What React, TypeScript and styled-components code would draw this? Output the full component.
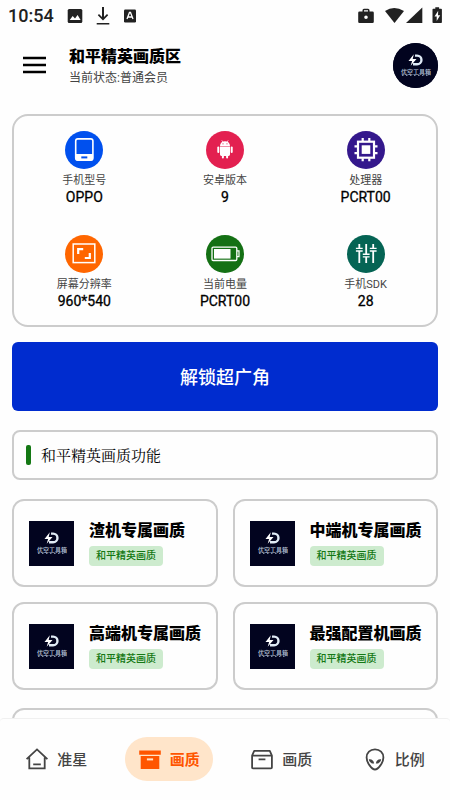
import React from "react";
import styled, { createGlobalStyle } from "styled-components";

const GlobalStyle = createGlobalStyle`
  * { box-sizing: border-box; }
  body {
    margin: 0;
    background: #fefefe;
    color: #000;
    font-family: Roboto, "Noto Sans CJK SC", sans-serif;
  }
  h1, h2, h3, p, dl, dt, dd { margin: 0; }
  button { font-family: inherit; cursor: pointer; }
`;

const Screen = styled.div`
  height: 100vh;
  display: flex;
  flex-direction: column;
`;

const StatusBar = styled.div`
  flex: none;
  height: 32px;
  padding: 0 7px 0 8px;
  display: flex;
  align-items: center;
  justify-content: space-between;
  color: #212121;
`;

const StatusGroup = styled.div`
  display: flex;
  align-items: center;
  gap: 13px;
  svg { display: block; }
`;

const Clock = styled.time`
  font-size: 18px;
  line-height: 24px;
  font-weight: 500;
`;

const Header = styled.header`
  flex: none;
  height: 66px;
  padding: 0 12px 0 23px;
  display: flex;
  align-items: center;
`;

const MenuButton = styled.button`
  width: 24px;
  height: 24px;
  padding: 0;
  border: 0;
  background: none;
  svg { display: block; }
`;

const Heading = styled.div`
  flex: 1;
  margin-left: 22px;
  padding-top: 3px;
`;

const Title = styled.h1`
  font-size: 16px;
  line-height: 22px;
  font-weight: 900;
`;

const Subtitle = styled.p`
  font-size: 12px;
  line-height: 20px;
  color: #444;
`;

const Avatar = styled.button`
  width: 45px;
  height: 45px;
  padding: 0;
  border: 0;
  border-radius: 50%;
  overflow: hidden;
  background: #02041f;
  svg { display: block; }
`;

const Main = styled.main`
  flex: 1;
  min-height: 0;
  overflow-y: auto;
  scrollbar-width: none;
  padding: 16px 12px 0;
`;

const InfoCard = styled.dl`
  display: grid;
  grid-template-columns: repeat(3, 1fr);
  row-gap: 30px;
  padding: 15px 0 16px;
  border: 2px solid #ccc;
  border-radius: 16px;
`;

const InfoItem = styled.div`
  display: flex;
  flex-direction: column;
  align-items: center;
`;

const InfoIcon = styled.span<{ $color: string }>`
  width: 38px;
  height: 38px;
  margin-bottom: 3px;
  border-radius: 50%;
  background: ${(p) => p.$color};
  svg { display: block; }
`;

const InfoLabel = styled.dt`
  font-size: 11px;
  line-height: 17px;
  color: #444;
`;

const InfoValue = styled.dd`
  font-size: 14px;
  line-height: 16px;
  font-weight: 400;
  -webkit-text-stroke: 0.3px #000;
`;

const UnlockButton = styled.button`
  display: block;
  width: 100%;
  height: 69px;
  margin-top: 15px;
  padding: 0 0 2px;
  border: 0;
  border-radius: 6px;
  background: #002ccf;
  color: #fff;
  font-size: 18px;
  font-weight: 500;
`;

const SectionTitle = styled.h2`
  display: flex;
  align-items: center;
  gap: 10px;
  height: 50px;
  margin: 19px 0;
  padding: 0 12px;
  border: 2px solid #ccc;
  border-radius: 8px;
  font-family: "Noto Serif CJK SC", "Noto Sans CJK SC", serif;
  font-size: 15px;
  line-height: 20px;
  font-weight: 400;

  &::before {
    content: "";
    width: 5px;
    height: 20px;
    border-radius: 2px;
    background: #147814;
  }
`;

const FeatureGrid = styled.div`
  display: grid;
  grid-template-columns: repeat(2, minmax(0, 1fr));
  gap: 15px;
`;

const cardFrame = `
  border: 2px solid #ccc;
  border-radius: 12px;
  background: #fefefe;
`;

const FeatureCard = styled.button`
  ${cardFrame}
  height: 88px;
  padding: 0 0 0 15px;
  display: flex;
  align-items: center;
  gap: 15px;
  color: #000;
  text-align: left;
  svg { display: block; flex: none; }
`;

const FeatureText = styled.span`
  display: flex;
  flex-direction: column;
  align-items: flex-start;
  gap: 4px;
  white-space: nowrap;
`;

const FeatureName = styled.span`
  font-size: 16px;
  line-height: 22px;
  font-weight: 900;
`;

const Tag = styled.span`
  padding: 0 7px;
  border-radius: 4px;
  background: #cdebce;
  color: #147814;
  font-size: 10px;
  line-height: 20px;
  font-weight: 500;
`;

const MorePanel = styled.section`
  ${cardFrame}
  height: 88px;
  margin-top: 18px;
`;

const TabBar = styled.nav`
  flex: none;
  display: grid;
  grid-template-columns: repeat(4, 1fr);
  place-items: center;
  height: 82px;
  padding-bottom: 2px;
  border-top: 1px solid #f0f0f0;
  border-radius: 4px;
  background: #fefefe;
`;

const Tab = styled.button<{ $active?: boolean }>`
  display: flex;
  align-items: center;
  gap: 8px;
  height: 44px;
  padding: 0 13px;
  border: 0;
  border-radius: 22px;
  background: ${(p) => (p.$active ? "#ffe5ca" : "transparent")};
  color: ${(p) => (p.$active ? "#ff5500" : "#444")};
  font-size: 15px;
  font-weight: ${(p) => (p.$active ? 700 : 500)};
  white-space: nowrap;
  svg { display: block; }
`;

const Logo = () => (
  <svg width="45" height="45" viewBox="0 0 45 45" aria-hidden="true">
    <rect width="45" height="45" fill="#02041f" />
    <path d="M20.8 11.2 15.5 18h3.6l-1.4 4.8 5.8-6.8h-3.8z" fill="#fff" />
    <path
      d="M22 12.6h2.1a4.3 4.3 0 0 1 0 8.7H20"
      fill="none"
      stroke="#dfeaf5"
      strokeWidth="2.4"
    />
    <text
      x="23"
      y="30.5"
      textAnchor="middle"
      fontSize="6"
      fontWeight="500"
      fill="#b9c6da"
    >
      优空工具箱
    </text>
    <path d="M9 32.5h28" stroke="#7d8ba6" strokeWidth="1" strokeDasharray="1.5 2.5" />
  </svg>
);

const PhoneIcon = () => (
  <svg width="38" height="38" viewBox="0 0 38 38" fill="none">
    <rect x="10.7" y="7.9" width="17.2" height="21.4" rx="2.2" stroke="#fff" strokeWidth="1.6" />
    <path d="M10.5 23h17.6v4.3a2.5 2.5 0 0 1-2.5 2.5H13a2.5 2.5 0 0 1-2.5-2.5z" fill="#fff" />
    <rect x="16.3" y="25.4" width="6" height="2" fill="#0050ee" />
  </svg>
);

const AndroidIcon = () => (
  <svg width="38" height="38" viewBox="0 0 38 38" fill="#fff">
    <path d="M14 15.5h10v8a1.4 1.4 0 0 1-1.4 1.4h-7.2a1.4 1.4 0 0 1-1.4-1.4z" />
    <path d="M14 14.9a5 4.7 0 0 1 10 0z" />
    <rect x="11.3" y="15.5" width="2" height="6.4" rx="1" />
    <rect x="24.7" y="15.5" width="2" height="6.4" rx="1" />
    <rect x="15.9" y="23.5" width="2" height="4" rx="1" />
    <rect x="20.1" y="23.5" width="2" height="4" rx="1" />
    <path d="m15.8 9.3 1.2 2m5.2-2-1.2 2" stroke="#fff" strokeWidth=".7" />
    <circle cx="17" cy="12.8" r=".6" fill="#e32050" />
    <circle cx="21" cy="12.8" r=".6" fill="#e32050" />
  </svg>
);

const ChipIcon = () => (
  <svg width="38" height="38" viewBox="0 0 38 38" fill="none" stroke="#fff">
    <rect x="11" y="10.7" width="16" height="16" strokeWidth="2.2" />
    <rect x="14.7" y="14.3" width="8.6" height="8.6" fill="#fff" stroke="none" />
    <path
      d="M15.7 7v3m6.6-3v3m-6.6 17.3v3m6.6-3v3M7.5 15.3h3m-3 6.8h3m17-6.8h3m-3 6.8h3"
      strokeWidth="2.2"
    />
  </svg>
);

const ResolutionIcon = () => (
  <svg width="38" height="38" viewBox="0 0 38 38" fill="none" stroke="#fff">
    <rect x="8.2" y="9" width="21.6" height="18.6" strokeWidth="1.5" />
    <path d="M13.2 19v-4.8h5m6.6 3.8v5h-5" strokeWidth="2.2" />
  </svg>
);

const BatteryIcon = () => (
  <svg width="38" height="38" viewBox="0 0 38 38" fill="none">
    <rect x="6" y="12.1" width="24.8" height="13.4" rx="1.2" stroke="#fff" strokeWidth="1.3" />
    <rect x="8" y="14" width="16.5" height="9.6" fill="#fff" />
    <path d="M31 15.9h2v5.8h-2" stroke="#fff" strokeWidth="1.2" />
  </svg>
);

const SlidersIcon = () => (
  <svg width="38" height="38" viewBox="0 0 38 38" fill="none" stroke="#fff" strokeWidth="1.8">
    <path d="M12.3 9v4M12.3 16v12M19.2 9v10M19.2 22V28M26.2 9v4M26.2 16v12" />
    <path d="M8.9 13.4h6.8M8.9 16h6.8M15.8 19.3h6.8M15.8 21.9h6.8M22.8 13.4h6.8M22.8 16h6.8" strokeWidth="1.4" />
  </svg>
);

const HomeIcon = () => (
  <svg width="24" height="24" viewBox="0 0 24 24" fill="none" stroke="currentColor" strokeWidth="1.8">
    <path d="M1.6 12.2 12 2.4l10.4 9.8M4.3 10.4v11h15.4v-11M8.2 17.4h7.6" />
  </svg>
);

const ArchiveIcon = () => (
  <svg width="24" height="24" viewBox="0 0 24 24" fill="currentColor">
    <path d="M1.2 3.4h21.6v4.3H1.2zM2.7 9h18.6v12.9H2.7z" />
    <rect x="8.9" y="11.4" width="6.2" height="2" fill="#ffe5ca" />
  </svg>
);

const BoxIcon = () => (
  <svg width="24" height="24" viewBox="0 0 24 24" fill="none" stroke="currentColor" strokeWidth="1.8" strokeLinejoin="round">
    <path d="M2.1 8.6 4.2 3.8h15.6l2.1 4.8v11.9q0 .9-.9.9H3q-.9 0-.9-.9zM2.1 8.6h19.8M8.6 12.3h6.8" />
  </svg>
);

const AlienIcon = () => (
  <svg width="24" height="24" viewBox="0 0 24 24" fill="none">
    <path
      d="M12 2.4c-5 0-8.4 3.5-8.4 8.1 0 5 5.2 12 8.4 12s8.4-7 8.4-12c0-4.6-3.4-8.1-8.4-8.1z"
      stroke="currentColor"
      strokeWidth="1.8"
    />
    <path
      d="M5.8 12.3c2.8-.5 5.2 1.3 5.3 4.3-2.9.2-5.1-1.6-5.3-4.3zM18.2 12.3c-2.8-.5-5.2 1.3-5.3 4.3 2.9.2 5.1-1.6 5.3-4.3z"
      fill="currentColor"
    />
  </svg>
);

const device = [
  { label: "手机型号", value: "OPPO", color: "#0050ee", icon: <PhoneIcon /> },
  { label: "安卓版本", value: "9", color: "#e32050", icon: <AndroidIcon /> },
  { label: "处理器", value: "PCRT00", color: "#34188c", icon: <ChipIcon /> },
  { label: "屏幕分辨率", value: "960*540", color: "#ff6600", icon: <ResolutionIcon /> },
  { label: "当前电量", value: "PCRT00", color: "#147014", icon: <BatteryIcon /> },
  { label: "手机SDK", value: "28", color: "#056454", icon: <SlidersIcon /> },
];

const features = ["渣机专属画质", "中端机专属画质", "高端机专属画质", "最强配置机画质"];

const tabs = [
  { label: "准星", icon: <HomeIcon /> },
  { label: "画质", icon: <ArchiveIcon />, active: true },
  { label: "画质", icon: <BoxIcon /> },
  { label: "比例", icon: <AlienIcon /> },
];

export default function App() {
  return (
    <Screen>
      <GlobalStyle />
      <StatusBar>
        <StatusGroup>
          <Clock>10:54</Clock>
          <svg width="16" height="16" viewBox="0 0 16 16" fill="currentColor">
            <rect x=".7" y="1" width="14.6" height="14" rx="1.5" />
            <path d="m2.7 12 3-4 2.3 2.6L10.6 7l3 5z" fill="#fefefe" />
          </svg>
          <svg width="14" height="18" viewBox="0 0 14 18" fill="currentColor">
            <path d="M6 0h2v10l3-3 1.2 1.2L7 13.4 1.8 8.2 3 7l3 3zM.7 16h12.6v1.5H.7z" />
          </svg>
          <svg width="14" height="14" viewBox="0 0 14 14" fill="none">
            <rect x="1" y=".5" width="12" height="13" rx="1.2" fill="currentColor" />
            <path d="m4 10 2.5-6.5h1L10 10M5 8h4" stroke="#fefefe" strokeWidth="1.3" />
          </svg>
        </StatusGroup>
        <svg width="86" height="18" viewBox="0 0 86 18" fill="currentColor">
          <path fillRule="evenodd" d="M2.5 4.5h3V3.2Q5.5 1.7 7 1.7h4q1.5 0 1.5 1.5v1.3h3q1.3 0 1.3 1.3v9q0 1.3-1.3 1.3h-13q-1.3 0-1.3-1.3v-9q0-1.3 1.3-1.3zM7 4.5h4V3.2H7zm2 4a1.8 1.8 0 1 0 0 3.6 1.8 1.8 0 0 0 0-3.6z" />
          <path d="M28 4q9-6 19 0L37.5 16z" />
          <path d="M49 16 65.3.5V16z" />
          <path fillRule="evenodd" d="M76.3 1.8h2V.3h3.8v1.5h2q.8 0 .8.8v12.6q0 .8-.8.8h-7.8q-.8 0-.8-.8V2.6q0-.8.8-.8zM81.2 3.8l-3.7 5.7h2.2V14l3.5-5.8H81z" />
        </svg>
      </StatusBar>

      <Header>
        <MenuButton aria-label="菜单">
          <svg width="24" height="24" viewBox="0 0 24 24" stroke="#000" strokeWidth="2.5">
            <path d="M0 5h23M0 12h23M0 19h23" />
          </svg>
        </MenuButton>
        <Heading>
          <Title>和平精英画质区</Title>
          <Subtitle>当前状态:普通会员</Subtitle>
        </Heading>
        <Avatar aria-label="头像">
          <Logo />
        </Avatar>
      </Header>

      <Main>
        <InfoCard>
          {device.map((item) => (
            <InfoItem key={item.label}>
              <InfoIcon $color={item.color}>{item.icon}</InfoIcon>
              <InfoLabel>{item.label}</InfoLabel>
              <InfoValue>{item.value}</InfoValue>
            </InfoItem>
          ))}
        </InfoCard>

        <UnlockButton>解锁超广角</UnlockButton>
        <SectionTitle>和平精英画质功能</SectionTitle>

        <FeatureGrid>
          {features.map((name) => (
            <FeatureCard key={name}>
              <Logo />
              <FeatureText>
                <FeatureName>{name}</FeatureName>
                <Tag>和平精英画质</Tag>
              </FeatureText>
            </FeatureCard>
          ))}
        </FeatureGrid>
        <MorePanel />
      </Main>

      <TabBar>
        {tabs.map((tab, index) => (
          <Tab key={index} $active={tab.active} aria-current={tab.active ? "page" : undefined}>
            {tab.icon}
            {tab.label}
          </Tab>
        ))}
      </TabBar>
    </Screen>
  );
}
